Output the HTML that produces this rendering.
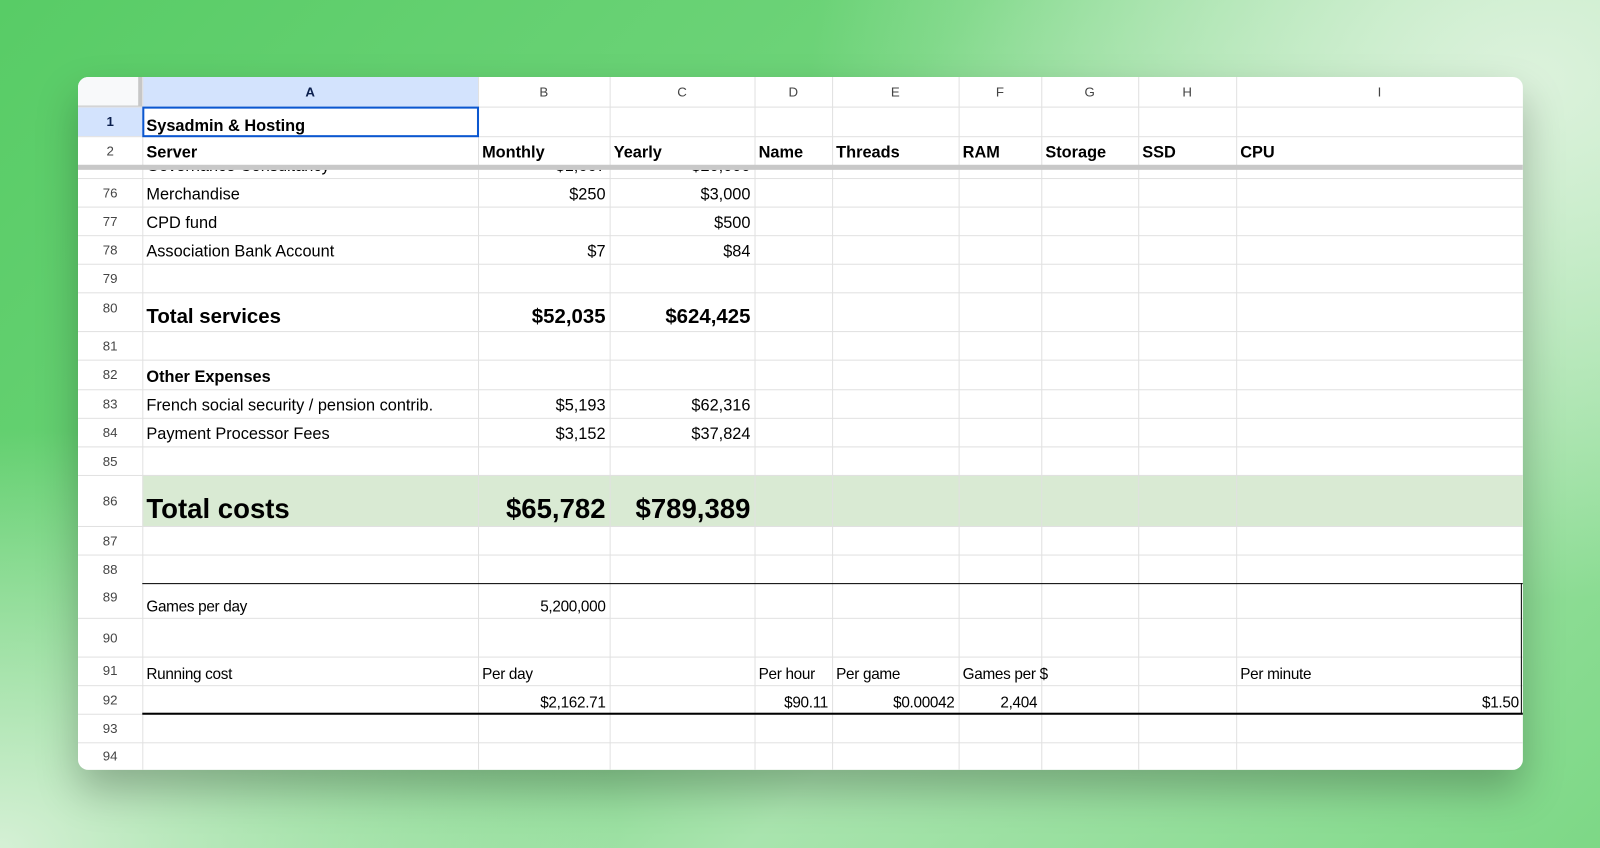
<!DOCTYPE html>
<html><head><meta charset="utf-8"><style>
*{margin:0;padding:0;box-sizing:border-box}
body{width:1600px;height:848px;overflow:hidden;position:relative;font-family:"Liberation Sans",Arial,sans-serif;
background:radial-gradient(ellipse 720px 520px at 1530px 80px,#dcf2dc 0%,rgba(220,242,220,0) 100%),
radial-gradient(ellipse 620px 420px at 0px 848px,#d5f0d5 0%,rgba(213,240,213,0) 100%),
linear-gradient(135deg,#58cc66 0%,#6fd47a 40%,#a9e4ae 65%,#7dd886 100%);}
#card{position:absolute;left:77.5px;top:76.5px;width:1416px;height:679px;background:#fff;border-radius:10px;overflow:hidden;box-shadow:0 20px 40px rgba(0,0,0,.25);transform:scale(1.0204);transform-origin:0 0}
.h{position:absolute;left:0;width:1416px;height:1px;background:#e1e1e1}
.v{position:absolute;top:0;width:1px;height:679px;background:#e1e1e1}
.c{position:absolute;display:flex;align-items:flex-end;padding:0 4px 2px;white-space:nowrap;color:#000;font-size:16px}
.r{justify-content:flex-end}
.hd{position:absolute;display:flex;align-items:center;justify-content:center;font-size:13px;color:#444}
.b{font-weight:bold}
.k{font-size:15px;letter-spacing:-0.3px}
</style></head><body>
<div id="card">
<div style="position:absolute;left:63px;top:0;width:329px;height:29px;background:#d3e3fd"></div>
<div style="position:absolute;left:0;top:29px;width:63px;height:29px;background:#d3e3fd"></div>
<div style="position:absolute;left:0;top:0;width:63px;height:29px;background:#f8f9fa;border-right:4px solid #c7c7c7;border-bottom:1px solid #c7c7c7"></div>
<div style="position:absolute;left:63px;top:390px;width:1353px;height:50px;background:#d9ead3"></div>
<div class="h" style="top:29px"></div><div class="h" style="top:58px"></div>
<div class="h" style="top:99px"></div><div class="h" style="top:127px"></div><div class="h" style="top:155px"></div>
<div class="h" style="top:183px"></div><div class="h" style="top:211px"></div><div class="h" style="top:249px"></div>
<div class="h" style="top:277px"></div><div class="h" style="top:306px"></div><div class="h" style="top:334px"></div>
<div class="h" style="top:362px"></div><div class="h" style="top:390px"></div><div class="h" style="top:440px"></div>
<div class="h" style="top:468px"></div><div class="h" style="top:530px"></div>
<div class="h" style="top:568px"></div><div class="h" style="top:596px"></div><div class="h" style="top:624px"></div><div class="h" style="top:652px"></div>
<div class="v" style="left:63px"></div><div class="v" style="left:392px"></div><div class="v" style="left:521px"></div>
<div class="v" style="left:663px"></div><div class="v" style="left:739px"></div><div class="v" style="left:863px"></div>
<div class="v" style="left:944px"></div><div class="v" style="left:1039px"></div><div class="v" style="left:1135px"></div>
<!-- partial scrolled row -->
<div style="position:absolute;left:0;top:91px;width:1416px;height:8px;overflow:hidden">
<div class="c" style="left:63px;top:-20px;width:329px;height:28px">Governance Consultancy</div>
<div class="c r" style="left:392px;top:-20px;width:129px;height:28px">$1,667</div>
<div class="c r" style="left:521px;top:-20px;width:142px;height:28px">$20,000</div>
</div>
<div style="position:absolute;left:0;top:86px;width:1416px;height:5px;background:#c8c8c8"></div>
<div style="position:absolute;left:63px;top:496px;width:1353px;height:1px;background:#000"></div>
<div style="position:absolute;left:63px;top:623px;width:1353px;height:2px;background:#000"></div>
<div style="position:absolute;left:1414px;top:496px;width:1px;height:128px;background:#000"></div>
<div style="position:absolute;left:63px;top:29px;width:330px;height:30px;border:2px solid #0b57d0"></div>
<!-- col headers -->
<div class="hd b" style="left:63px;top:0;width:329px;height:29px;color:#0b1f4d">A</div>
<div class="hd" style="left:392px;top:0;width:129px;height:29px">B</div>
<div class="hd" style="left:521px;top:0;width:142px;height:29px">C</div>
<div class="hd" style="left:663px;top:0;width:76px;height:29px">D</div>
<div class="hd" style="left:739px;top:0;width:124px;height:29px">E</div>
<div class="hd" style="left:863px;top:0;width:81px;height:29px">F</div>
<div class="hd" style="left:944px;top:0;width:95px;height:29px">G</div>
<div class="hd" style="left:1039px;top:0;width:96px;height:29px">H</div>
<div class="hd" style="left:1135px;top:0;width:281px;height:29px">I</div>
<!-- row headers -->
<div class="hd b" style="left:0;top:29px;width:63px;height:29px;color:#0b1f4d">1</div>
<div class="hd" style="left:0;top:58px;width:63px;height:28px">2</div>
<div class="hd" style="left:0;top:99px;width:63px;height:28px">76</div>
<div class="hd" style="left:0;top:127px;width:63px;height:28px">77</div>
<div class="hd" style="left:0;top:155px;width:63px;height:28px">78</div>
<div class="hd" style="left:0;top:183px;width:63px;height:28px">79</div>
<div class="hd" style="left:0;top:211px;width:63px;height:38px;align-items:flex-start;padding-top:8px">80</div>
<div class="hd" style="left:0;top:249px;width:63px;height:28px">81</div>
<div class="hd" style="left:0;top:277px;width:63px;height:29px">82</div>
<div class="hd" style="left:0;top:306px;width:63px;height:28px">83</div>
<div class="hd" style="left:0;top:334px;width:63px;height:28px">84</div>
<div class="hd" style="left:0;top:362px;width:63px;height:28px">85</div>
<div class="hd" style="left:0;top:390px;width:63px;height:50px">86</div>
<div class="hd" style="left:0;top:440px;width:63px;height:28px">87</div>
<div class="hd" style="left:0;top:468px;width:63px;height:28px">88</div>
<div class="hd" style="left:0;top:496px;width:63px;height:34px;align-items:flex-start;padding-top:6px">89</div>
<div class="hd" style="left:0;top:530px;width:63px;height:38px">90</div>
<div class="hd" style="left:0;top:568px;width:63px;height:28px;align-items:flex-start;padding-top:6px">91</div>
<div class="hd" style="left:0;top:596px;width:63px;height:28px">92</div>
<div class="hd" style="left:0;top:624px;width:63px;height:28px">93</div>
<div class="hd" style="left:0;top:652px;width:63px;height:27px">94</div>
<!-- frozen rows -->
<div class="c b" style="left:63px;top:29px;width:329px;height:29px;padding-bottom:0">Sysadmin &amp; Hosting</div>
<div class="c b" style="left:63px;top:58px;width:329px;height:28px">Server</div>
<div class="c b" style="left:392px;top:58px;width:129px;height:28px">Monthly</div>
<div class="c b" style="left:521px;top:58px;width:142px;height:28px">Yearly</div>
<div class="c b" style="left:663px;top:58px;width:76px;height:28px">Name</div>
<div class="c b" style="left:739px;top:58px;width:124px;height:28px">Threads</div>
<div class="c b" style="left:863px;top:58px;width:81px;height:28px">RAM</div>
<div class="c b" style="left:944px;top:58px;width:95px;height:28px">Storage</div>
<div class="c b" style="left:1039px;top:58px;width:96px;height:28px">SSD</div>
<div class="c b" style="left:1135px;top:58px;width:281px;height:28px">CPU</div>
<!-- body -->
<div class="c" style="left:63px;top:99px;width:329px;height:28px">Merchandise</div>
<div class="c r" style="left:392px;top:99px;width:129px;height:28px">$250</div>
<div class="c r" style="left:521px;top:99px;width:142px;height:28px">$3,000</div>
<div class="c" style="left:63px;top:127px;width:329px;height:28px">CPD fund</div>
<div class="c r" style="left:521px;top:127px;width:142px;height:28px">$500</div>
<div class="c" style="left:63px;top:155px;width:329px;height:28px">Association Bank Account</div>
<div class="c r" style="left:392px;top:155px;width:129px;height:28px">$7</div>
<div class="c r" style="left:521px;top:155px;width:142px;height:28px">$84</div>
<div class="c b" style="left:63px;top:211px;width:329px;height:38px;font-size:20px">Total services</div>
<div class="c b r" style="left:392px;top:211px;width:129px;height:38px;font-size:20px">$52,035</div>
<div class="c b r" style="left:521px;top:211px;width:142px;height:38px;font-size:20px">$624,425</div>
<div class="c b" style="left:63px;top:277px;width:329px;height:29px">Other Expenses</div>
<div class="c" style="left:63px;top:306px;width:329px;height:28px">French social security / pension contrib.</div>
<div class="c r" style="left:392px;top:306px;width:129px;height:28px">$5,193</div>
<div class="c r" style="left:521px;top:306px;width:142px;height:28px">$62,316</div>
<div class="c" style="left:63px;top:334px;width:329px;height:28px">Payment Processor Fees</div>
<div class="c r" style="left:392px;top:334px;width:129px;height:28px">$3,152</div>
<div class="c r" style="left:521px;top:334px;width:142px;height:28px">$37,824</div>
<div class="c b" style="left:63px;top:390px;width:329px;height:50px;font-size:27px;padding-bottom:1px">Total costs</div>
<div class="c b r" style="left:392px;top:390px;width:129px;height:50px;font-size:27px;padding-bottom:1px">$65,782</div>
<div class="c b r" style="left:521px;top:390px;width:142px;height:50px;font-size:27px;padding-bottom:1px">$789,389</div>
<div class="c k" style="left:63px;top:496px;width:329px;height:34px">Games per day</div>
<div class="c k r" style="left:392px;top:496px;width:129px;height:34px">5,200,000</div>
<div class="c k" style="left:63px;top:568px;width:329px;height:28px">Running cost</div>
<div class="c k" style="left:392px;top:568px;width:129px;height:28px">Per day</div>
<div class="c k" style="left:663px;top:568px;width:76px;height:28px">Per hour</div>
<div class="c k" style="left:739px;top:568px;width:124px;height:28px">Per game</div>
<div class="c k" style="left:863px;top:568px;width:176px;height:28px">Games per $</div>
<div class="c k" style="left:1135px;top:568px;width:281px;height:28px">Per minute</div>
<div class="c k r" style="left:392px;top:596px;width:129px;height:28px">$2,162.71</div>
<div class="c k r" style="left:663px;top:596px;width:76px;height:28px">$90.11</div>
<div class="c k r" style="left:739px;top:596px;width:124px;height:28px">$0.00042</div>
<div class="c k r" style="left:863px;top:596px;width:81px;height:28px">2,404</div>
<div class="c k r" style="left:1135px;top:596px;width:281px;height:28px">$1.50</div>
</div>
</body></html>
